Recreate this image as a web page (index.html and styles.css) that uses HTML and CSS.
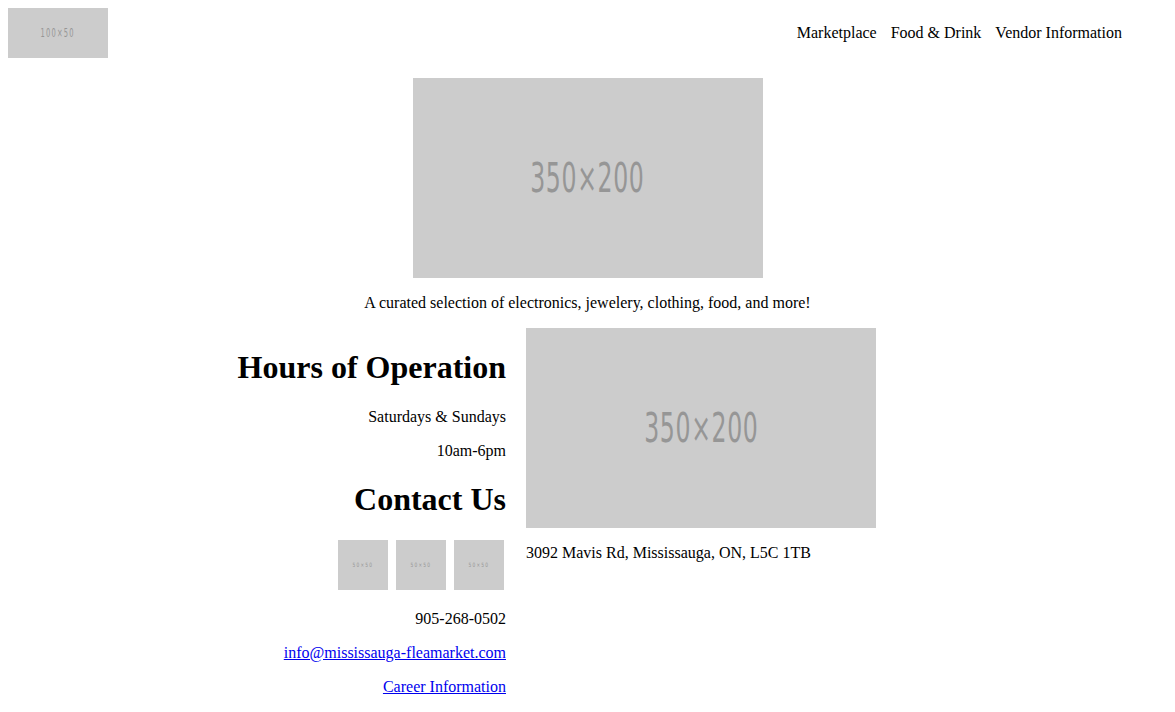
FILE: index.html
```html
<!DOCTYPE html>
<html>
<head>
<meta charset="utf-8">
<title>Mississauga Flea Market</title>
<link rel="stylesheet" href="styles.css">
</head>
<body>
<header class="site-header">
  <div class="ph ph-logo"><span class="ph-text">100×50</span></div>
  <nav class="main-nav">
    <a href="#">Marketplace</a>
    <a href="#">Food &amp; Drink</a>
    <a href="#">Vendor Information</a>
  </nav>
</header>
<section class="hero">
  <div class="ph ph-big"><span class="ph-text">350×200</span></div>
  <p class="tagline">A curated selection of electronics, jewelery, clothing, food, and more!</p>
</section>
<main class="info">
  <div class="info-left">
    <h1>Hours of Operation</h1>
    <p>Saturdays &amp; Sundays</p>
    <p>10am-6pm</p>
    <h1>Contact Us</h1>
    <div class="social">
      <div class="ph ph-icon"><span class="ph-text">50×50</span></div>
      <div class="ph ph-icon"><span class="ph-text">50×50</span></div>
      <div class="ph ph-icon"><span class="ph-text">50×50</span></div>
    </div>
    <p>905-268-0502</p>
    <p><a href="#">info@mississauga-fleamarket.com</a></p>
    <p><a href="#">Career Information</a></p>
  </div>
  <div class="info-right">
    <div class="ph ph-big"><span class="ph-text">350×200</span></div>
    <p>3092 Mavis Rd, Mississauga, ON, L5C 1TB</p>
  </div>
</main>
</body>
</html>
```

FILE: styles.css
```css
body {
  margin: 8px;
  font-family: "Liberation Serif", "Times New Roman", serif;
  font-size: 16px;
  color: #000;
  background: #fff;
}

.ph {
  background: #cccccc;
  color: #969696;
  display: flex;
  align-items: center;
  justify-content: center;
  overflow: hidden;
  flex: none;
}
.ph-text {
  display: inline-block;
  font-family: "DejaVu Sans", sans-serif;
  font-stretch: condensed;
  white-space: nowrap;
}

.ph-logo { width: 100px; height: 50px; }
.ph-logo .ph-text { font-size: 12px; transform: scaleX(0.62); letter-spacing: 2px; }

.ph-big { width: 350px; height: 200px; }
.ph-big .ph-text { font-size: 41px; transform: scaleX(0.64); letter-spacing: 1px; }

.ph-icon { width: 50px; height: 50px; }
.ph-icon .ph-text { font-size: 6px; transform: scaleX(0.8); letter-spacing: 1.5px; }

.site-header {
  display: flex;
  justify-content: space-between;
  align-items: center;
  height: 50px;
}
.main-nav {
  display: flex;
  gap: 14px;
  padding-right: 45px;
}
.main-nav a {
  color: #000;
  text-decoration: none;
}

.hero {
  margin-top: 20px;
  display: flex;
  flex-direction: column;
  align-items: center;
}
.tagline {
  margin: 16px 0 16px;
}

.info {
  display: flex;
  gap: 20px;
}
.info-left {
  flex: 0 0 498px;
  text-align: right;
}
.info-left h1 {
  font-size: 32px;
  margin: 21.44px 0;
}
.info-left p {
  margin: 16px 0;
}
.social {
  display: flex;
  justify-content: flex-end;
  gap: 8px;
  padding-right: 2px;
  height: 54px;
  margin: 21.44px 0 16px;
}
.info-right p {
  margin: 16px 0;
}
a { color: #0000ee; }
```
